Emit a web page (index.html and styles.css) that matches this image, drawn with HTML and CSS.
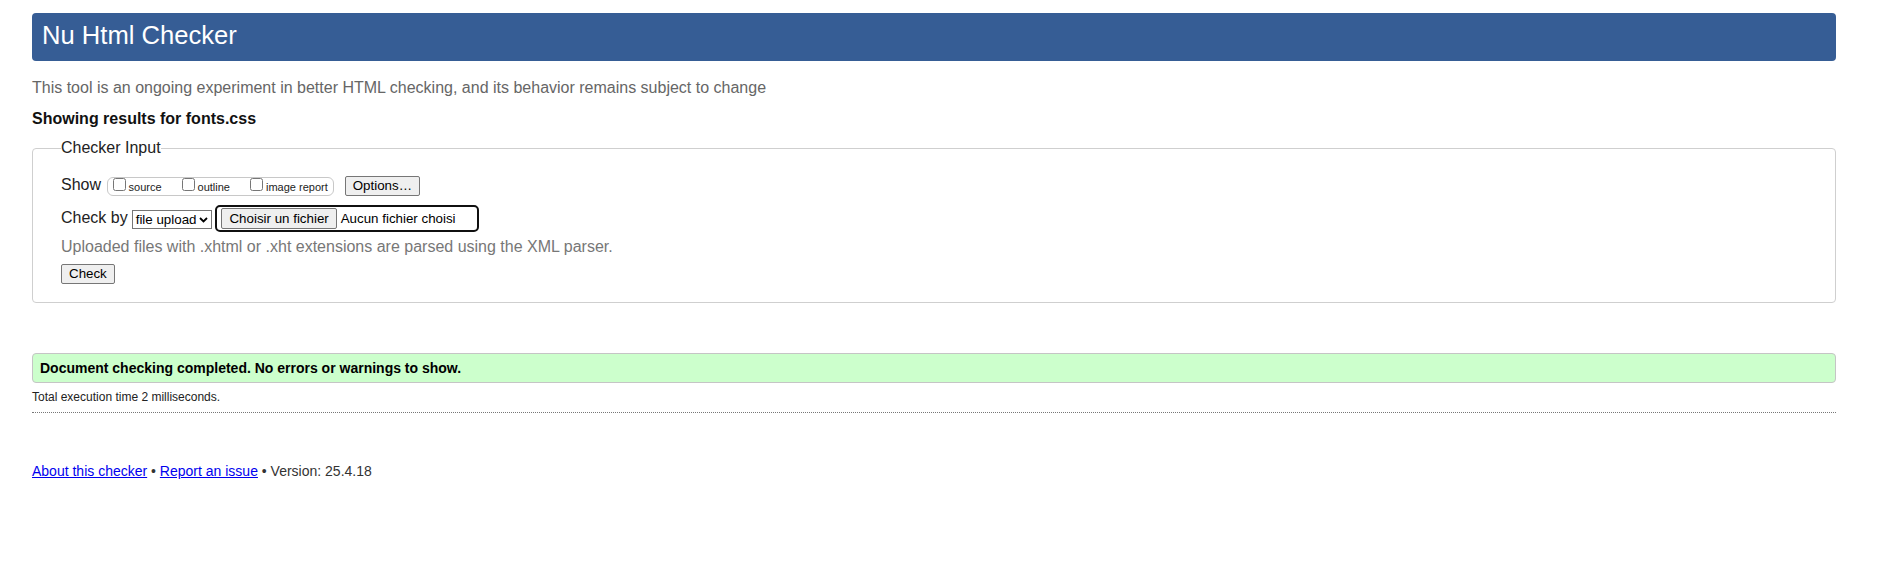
FILE: index.html
```html
<!DOCTYPE html>
<html lang="en">
<head>
<meta charset="utf-8">
<title>Nu Html Checker</title>
<link rel="stylesheet" href="styles.css">
</head>
<body>
<header class="masthead"><h1 class="title">Nu Html Checker</h1></header>
<p class="intro">This tool is an ongoing experiment in better HTML checking, and its behavior remains subject to change</p>
<p class="showing">Showing results for fonts.css</p>
<form class="checker">
  <fieldset class="input-set">
    <legend class="legend">Checker Input</legend>
    <div class="row row-show">
      <span class="row-label show-label">Show</span>
      <span class="group">
        <label class="opt"><input type="checkbox" class="cb"><span class="opt-text">source</span></label>
        <label class="opt"><input type="checkbox" class="cb"><span class="opt-text">outline</span></label>
        <label class="opt"><input type="checkbox" class="cb"><span class="opt-text opt-last">image report</span></label>
      </span>
      <button type="button" class="btn btn-options">Options…</button>
    </div>
    <div class="row row-check">
      <span class="row-label check-label">Check by</span>
      <span class="select"><span class="select-text">file upload</span><svg class="chev" width="9" height="6" viewBox="0 0 9 6"><path d="M1 1 L4.5 4.5 L8 1" fill="none" stroke="#000" stroke-width="1.8"/></svg></span>
      <span class="file"><span class="btn btn-file">Choisir un fichier</span><span class="file-text">Aucun fichier choisi</span></span>
    </div>
    <p class="hint">Uploaded files with .xhtml or .xht extensions are parsed using the XML parser.</p>
    <div class="row row-submit">
      <button type="button" class="btn btn-check">Check</button>
    </div>
  </fieldset>
</form>
<p class="success">Document checking completed. No errors or warnings to show.</p>
<p class="time">Total execution time 2 milliseconds.</p>
<div class="rule"></div>
<p class="footer"><a class="link" href="#">About this checker</a> • <a class="link" href="#">Report an issue</a> • Version: 25.4.18</p>
</body>
</html>
```
FILE: styles.css
```css
html, body {
  background: #fff;
}
body {
  margin: 0;
  padding: 13px 43px 40px 32px;
  font-family: "Liberation Sans", Arial, sans-serif;
  font-size: 16px;
  color: #222;
}
.masthead {
  height: 48px;
  background: #365d95;
  border-radius: 4px;
  padding: 0 10px;
  box-sizing: border-box;
}
.title {
  margin: 0;
  font-size: 25.6px;
  font-weight: 400;
  line-height: 45px;
  color: #fff;
}
.intro {
  margin: 18px 0 0;
  color: #666;
}
.showing {
  margin: 12.5px 0 0;
  font-weight: bold;
  color: #111;
}
.checker {
  margin: 0;
}
.input-set {
  margin: 11.5px 0 0;
  padding: 19px 28px 18px 28px;
  border: 1px solid #cfcfcf;
  border-radius: 4px;
  min-width: 0;
}
.legend {
  padding: 0;
  color: #222;
}
.row {
  display: flex;
  align-items: flex-start;
}
.row-label {
  line-height: 18px;
  white-space: nowrap;
}
.show-label {
  margin-right: 5.5px;
}
.group {
  display: flex;
  align-items: flex-start;
  box-sizing: border-box;
  height: 19px;
  margin-top: 1px;
  padding: 0 1px;
  border: 1px solid #c8c8c8;
  border-radius: 6px;
}
.opt {
  display: flex;
  align-items: flex-start;
}
.cb {
  width: 13px;
  height: 13px;
  margin: 0 3px 0 4px;
}
.opt-text {
  font-size: 11px;
  line-height: 13px;
  margin-top: 3px;
  margin-right: 16px;
  white-space: nowrap;
}
.opt-text.opt-last {
  margin-right: 4px;
}
.btn {
  font-family: "Liberation Sans", Arial, sans-serif;
  font-size: 13.333px;
  color: #000;
  background: #efefef;
  border: 1px solid #767676;
  border-radius: 2px;
  box-sizing: border-box;
  height: 20px;
  line-height: 16px;
  padding: 1px 7px;
  white-space: nowrap;
}
.btn-options {
  margin-left: 11px;
}
.row-check {
  margin-top: 9px;
}
.check-label {
  margin-top: 4px;
}
.select {
  display: flex;
  align-items: center;
  box-sizing: border-box;
  height: 19px;
  margin-top: 5px;
  margin-left: 4px;
  padding: 0 3px;
  border: 1px solid #767676;
  background: #fff;
  font-size: 13.333px;
  color: #000;
  white-space: nowrap;
}
.chev {
  margin-left: 3px;
  display: block;
}
.file {
  display: flex;
  align-items: flex-start;
  box-sizing: border-box;
  width: 264px;
  height: 27px;
  margin-left: 3px;
  padding: 1px 4px;
  border: 2px solid #101010;
  border-radius: 5px;
}
.btn-file {
  display: block;
  height: 21px;
  line-height: 17px;
  padding: 1px 7px;
}
.file-text {
  margin-left: 4px;
  font-size: 13.333px;
  line-height: 21px;
  color: #000;
  white-space: nowrap;
}
.hint {
  margin: 6px 0 0;
  color: #777;
}
.row-submit {
  margin-top: 8px;
}
.success {
  margin: 50px 0 0;
  padding: 6.5px 7px;
  line-height: 15px;
  font-size: 14px;
  font-weight: bold;
  color: #000;
  background: #ccffcc;
  border: 1px solid #c5c5c5;
  border-radius: 4px;
}
.time {
  margin: 7px 0 0;
  font-size: 12px;
  color: #222;
}
.rule {
  margin-top: 8px;
  border-top: 1px dotted #777;
}
.footer {
  margin: 49.5px 0 0;
  font-size: 14px;
  color: #333;
}
.link {
  color: #0000ee;
  text-decoration: underline;
}
```
